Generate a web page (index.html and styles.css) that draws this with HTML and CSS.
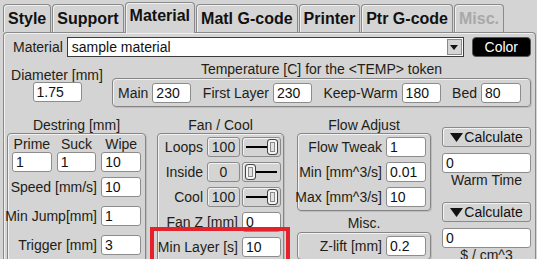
FILE: index.html
```html
<!DOCTYPE html>
<html lang="en">
<head>
  <meta charset="UTF-8" />
  <title>Material</title>
  <link rel="stylesheet" href="styles.css">
</head>
<body>

  <div class="tabs">
    <div class="tab">Style</div>
    <div class="tab">Support</div>
    <div class="tab active">Material</div>
    <div class="tab">Matl G-code</div>
    <div class="tab">Printer</div>
    <div class="tab">Ptr G-code</div>
    <div class="tab disabled">Misc.</div>
  </div>

  <div class="panel">
    <div class="row-material">
      <span class="lbl-material">Material</span>
      <div class="combo">
        <span class="combo-text">sample material</span>
        <span class="combo-arrow"><svg width="8" height="5" viewBox="0 0 8 5"><polygon points="0,0 8,0 4,5" fill="#111"/></svg></span>
      </div>
      <button class="btn-color">Color</button>
    </div>

    <div class="row-temp">
      <div class="diameter">
        <div class="cap-small">Diameter [mm]</div>
        <input class="field w49" type="text" value="1.75" />
      </div>
      <div class="temp">
        <div class="cap">Temperature [C] for the &lt;TEMP&gt; token</div>
        <div class="box temp-box">
          <span class="pair">Main <input class="field w39" type="text" value="230" /></span>
          <span class="pair">First Layer <input class="field w39" type="text" value="230" /></span>
          <span class="pair">Keep-Warm <input class="field w39" type="text" value="180" /></span>
          <span class="pair">Bed <input class="field w40" type="text" value="80" /></span>
        </div>
      </div>
    </div>

    <div class="row-main">
      <div class="col col-destring">
        <div class="cap">Destring [mm]</div>
        <div class="box destring-box">
          <div class="triple">
            <span>Prime</span><span>Suck</span><span>Wipe</span>
            <input class="field" type="text" value="1" />
            <input class="field" type="text" value="1" />
            <input class="field" type="text" value="10" />
          </div>
          <div class="kv-list">
            <div class="kv">Speed [mm/s] <input class="field w40" type="text" value="10" /></div>
            <div class="kv">Min Jump[mm] <input class="field w40" type="text" value="1" /></div>
            <div class="kv">Trigger [mm] <input class="field w40" type="text" value="3" /></div>
          </div>
        </div>
      </div>

      <div class="col col-fan">
        <div class="cap">Fan / Cool</div>
        <div class="box fan-box">
          <div class="kv">Loops <span class="knob">100</span><span class="slider"><span class="track"></span><span class="thumb"></span></span></div>
          <div class="kv">Inside <span class="knob">0</span><span class="slider at-min"><span class="track"></span><span class="thumb"></span></span></div>
          <div class="kv">Cool <span class="knob">100</span><span class="slider"><span class="track"></span><span class="thumb"></span></span></div>
          <div class="kv">Fan Z [mm] <input class="field w39" type="text" value="0" /></div>
          <div class="kv">Min Layer [s] <input class="field w39" type="text" value="10" /></div>
        </div>
      </div>

      <div class="col col-flow">
        <div class="cap">Flow Adjust</div>
        <div class="box flow-box">
          <div class="kv">Flow Tweak <input class="field w40" type="text" value="1" /></div>
          <div class="kv">Min [mm^3/s] <input class="field w40" type="text" value="0.01" /></div>
          <div class="kv">Max [mm^3/s] <input class="field w40" type="text" value="10" /></div>
        </div>
        <div class="cap cap-misc">Misc.</div>
        <div class="box flow-box">
          <div class="kv">Z-lift [mm] <input class="field w40" type="text" value="0.2" /></div>
        </div>
      </div>

      <div class="col col-calc">
        <button class="btn-calc"><svg width="13" height="9" viewBox="0 0 13 9"><polygon points="0,0 13,0 6.5,9" fill="#111"/></svg>Calculate</button>
        <input class="field calc-field" type="text" value="0" />
        <div class="cap-small">Warm Time</div>
        <button class="btn-calc second"><svg width="13" height="9" viewBox="0 0 13 9"><polygon points="0,0 13,0 6.5,9" fill="#111"/></svg>Calculate</button>
        <input class="field calc-field" type="text" value="0" />
        <div class="cap-small">$ / cm^3</div>
      </div>
    </div>

    <div class="highlight"></div>
  </div>

</body>
</html>
```

FILE: styles.css
```css
* {
  box-sizing: border-box;
}
body {
  margin: 0;
  height: 259px;
  overflow: hidden;
  background: #d4d4d4;
  font-family: "Liberation Sans", Arial, sans-serif;
  font-size: 14px;
  color: #231d16;
}

/* tabs */
.tabs {
  display: flex;
  align-items: flex-end;
  gap: 1px;
  height: 32px;
  padding-left: 3px;
}
.tab {
  height: 28px;
  padding: 0 4px;
  border: 1px solid #8a8a8a;
  border-bottom: none;
  border-radius: 4px 4px 0 0;
  box-shadow: inset 1px 1px 0 #f0f0f0;
  font-size: 16px;
  font-weight: bold;
  line-height: 28px;
  color: #111;
}
.tab.active {
  position: relative;
  z-index: 1;
  height: 31px;
  margin-bottom: -1px;
  background: #d4d4d4;
  line-height: 26px;
}
.tab.disabled {
  color: #a8a8a8;
}

/* panel */
.panel {
  position: relative;
  overflow: hidden;
  margin-left: 3px;
  width: 533px;
  height: 227px;
  border: 1px solid #8a8a8a;
  border-bottom: none;
  border-radius: 4px 4px 0 0;
  box-shadow: inset 1px 1px 0 #f0f0f0;
}

.field {
  height: 20px;
  padding: 0 3px;
  border: 1px solid #8c8c8c;
  border-radius: 3px;
  background: #fff;
  font-family: "Liberation Sans", Arial, sans-serif;
  font-size: 14px;
  color: #111;
}
.w39 { width: 39px; }
.w40 { width: 40px; }
.w49 { width: 49px; }

.box {
  border: 1px solid #858585;
  border-radius: 4px;
  box-shadow: inset 1px 1px 0 #f2f2f2, 1px 1px 0 #bdbdbd;
}
.cap {
  line-height: 16px;
  text-align: center;
}
.cap-small {
  line-height: 14px;
  text-align: center;
}

/* material row */
.row-material {
  display: flex;
  align-items: center;
  height: 20px;
  margin-top: 4px;
  padding-left: 9px;
}
.lbl-material {
  margin-right: 4px;
}
.combo {
  display: flex;
  align-items: center;
  justify-content: space-between;
  width: 397px;
  height: 20px;
  border: 1px solid #3c3c3c;
  background: #fff;
}
.combo-text {
  padding-left: 4px;
  color: #111;
}
.combo-arrow {
  display: flex;
  align-items: center;
  justify-content: center;
  width: 15px;
  height: 16px;
  margin-right: 1px;
  border: 1px solid #8a8a8a;
  background: #d4d4d4;
}
.btn-color {
  width: 59px;
  height: 20px;
  margin-left: 8px;
  padding: 0;
  border: 1px solid #555;
  border-radius: 4px;
  background: #000;
  color: #fff;
  font-family: "Liberation Sans", Arial, sans-serif;
  font-size: 14px;
}

/* temperature row */
.row-temp {
  display: flex;
  align-items: flex-end;
  gap: 8px;
  margin-top: 4px;
  padding-left: 6px;
}
.diameter {
  display: flex;
  flex-direction: column;
  align-items: center;
  width: 94px;
  padding-bottom: 5px;
}
.temp {
  width: 419px;
}
.temp .cap {
  margin-bottom: 1px;
}
.temp-box {
  display: flex;
  align-items: center;
  justify-content: space-between;
  height: 29px;
  padding: 0 9px 0 5px;
}
.pair {
  display: flex;
  align-items: center;
  gap: 4px;
}

/* main row */
.row-main {
  display: flex;
  align-items: flex-start;
  gap: 11px;
  margin-top: 10px;
  padding-left: 3px;
}
.col-destring { width: 139px; }
.col-fan { width: 127px; }
.col-flow { width: 134px; margin-left: 2px; }
.col-calc {
  display: flex;
  flex-direction: column;
  width: 89px;
  padding-top: 10px;
}

.kv {
  display: flex;
  align-items: center;
  justify-content: flex-end;
  gap: 4px;
  height: 20px;
  white-space: nowrap;
}

.destring-box {
  height: 140px;
  padding: 3px 4px;
}
.triple {
  display: grid;
  grid-template-columns: repeat(3, 1fr);
  column-gap: 5px;
}
.triple span {
  line-height: 15px;
  text-align: center;
}
.triple .field {
  width: 100%;
}
.kv-list {
  display: flex;
  flex-direction: column;
  gap: 9px;
  margin-top: 5px;
}

.fan-box {
  display: flex;
  flex-direction: column;
  gap: 5px;
  height: 140px;
  padding: 3px 2px;
}
.knob {
  width: 33px;
  height: 20px;
  margin-right: -2px;
  border: 1px solid #8a8a8a;
  border-radius: 3px;
  box-shadow: inset 1px 1px 0 #f2f2f2;
  line-height: 18px;
  text-align: center;
}
.slider {
  display: flex;
  align-items: center;
  width: 39px;
  height: 20px;
  padding: 0 2px 0 3px;
  border: 1px solid #8a8a8a;
  border-radius: 3px;
  box-shadow: inset 1px 1px 0 #f2f2f2;
}
.slider.at-min {
  flex-direction: row-reverse;
  padding: 0 3px 0 2px;
}
.track {
  flex: 1;
  height: 2px;
  background: #000;
}
.thumb {
  width: 11px;
  height: 16px;
  border: 1px solid #444;
  border-radius: 3px;
  background: #e2e2e2;
  box-shadow: inset 0 0 0 2px #f4f4f4, inset 0 0 0 3px #8a8a8a;
}

.flow-box {
  display: flex;
  flex-direction: column;
  gap: 5px;
  padding: 3px 4px;
}
.cap-misc {
  margin-top: 4px;
  line-height: 17px;
}

.btn-calc {
  display: flex;
  align-items: center;
  justify-content: center;
  gap: 1px;
  height: 20px;
  padding: 0;
  border: 1px solid #8a8a8a;
  border-radius: 3px;
  background: #d4d4d4;
  box-shadow: inset 1px 1px 0 #f2f2f2;
  font-family: "Liberation Sans", Arial, sans-serif;
  font-size: 14px;
  color: #111;
}
.btn-calc.second {
  margin-top: 15px;
}
.calc-field {
  width: 89px;
  margin-top: 6px;
}

/* red highlight over the Min Layer row */
.highlight {
  position: absolute;
  left: 146px;
  top: 194px;
  width: 140px;
  height: 50px;
  border: 4px solid #e5222b;
}
```
